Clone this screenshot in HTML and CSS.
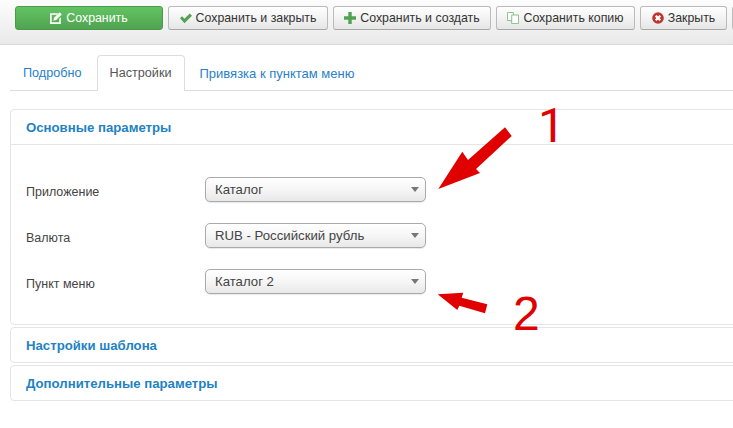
FILE: index.html
```html
<!DOCTYPE html>
<html lang="ru">
<head>
<meta charset="utf-8">
<title>Настройки</title>
<link rel="stylesheet" href="styles.css">
</head>
<body>
<div class="toolbar">
  <button class="btn btn-save"><svg class="ic" viewBox="0 0 14 14"><path fill="#fff" d="M0 1.500h9.500L8 3.200H2v8.800h8.800V8L12.600 6.200V14H0z"/><path fill="#fff" d="M11.200.3l2.500 2.500-6.500 6.500-3.300.8.800-3.300z"/></svg>Сохранить</button>
  <button class="btn btn-close-save"><svg class="ic" viewBox="0 0 14 14"><path fill="#51a351" d="M0 7.400l2.400-2.400 2.800 2.800L11.400 1.800 14 4.400 5.200 13z"/></svg>Сохранить и закрыть</button>
  <button class="btn btn-new"><svg class="ic" viewBox="0 0 14 14"><path fill="#51a351" d="M5 0h4v5h5v4H9v5H5V9H0V5h5z"/></svg>Сохранить и создать</button>
  <button class="btn btn-copy"><svg class="ic" viewBox="0 0 14 14"><path fill="#fff" stroke="#78b878" d="M.5.500h7v9.500h-7z"/><path fill="#fff" stroke="#78b878" d="M5.500 3.500h8v10h-8z"/></svg>Сохранить копию</button>
  <button class="btn btn-exit"><svg class="ic" viewBox="0 0 14 14"><circle cx="7" cy="7" r="6.800" fill="#bd362f"/><path stroke="#fff" stroke-width="2.600" d="M4.300 4.300l5.400 5.400M9.700 4.300l-5.400 5.400"/></svg>Закрыть</button>
  <button class="btn btn-stub"></button>
</div>

<div class="tabs">
  <a class="tab">Подробно</a>
  <a class="tab tab-active">Настройки</a>
  <a class="tab tab-wide">Привязка к пунктам меню</a>
</div>

<div class="accordion">
  <section class="panel">
    <h3 class="panel-head panel-head-open">Основные параметры</h3>
    <div class="panel-body">
      <div class="row"><label class="row-label">Приложение</label><div class="select"><span>Каталог</span><i class="caret"></i></div></div>
      <div class="row"><label class="row-label">Валюта</label><div class="select"><span>RUB - Российский рубль</span><i class="caret"></i></div></div>
      <div class="row"><label class="row-label">Пункт меню</label><div class="select"><span>Каталог 2</span><i class="caret"></i></div></div>
    </div>
  </section>
  <section class="panel panel-second"><h3 class="panel-head">Настройки шаблона</h3></section>
  <section class="panel panel-third"><h3 class="panel-head">Дополнительные параметры</h3></section>
</div>

<svg class="arrow arrow-one" viewBox="438 126 76 66"><path fill="#e00000" d="M438.300 189 L462.300 151.700 L468 160 L505 127.300 L511.700 136 L476 169 L480 173 Z"/></svg>
<span class="mark mark-one">1</span>
<svg class="arrow arrow-two" viewBox="437 292 52 24"><path fill="#e00000" d="M437.700 294.300 L463.300 292.700 L461.700 297.700 L487.300 304.300 L485 313.300 L459.300 305.700 L457.300 310 Z"/></svg>
<span class="mark mark-two">2</span>
</body>
</html>
```

FILE: styles.css
```css
* { box-sizing: border-box; }
html, body { margin: 0; padding: 0; }
body {
  width: 733px;
  height: 428px;
  overflow: hidden;
  position: relative;
  background: #fff;
  font-family: "Liberation Sans", Arial, sans-serif;
  font-size: 12.500px;
  color: #333;
}
.toolbar {
  height: 45px;
  display: flex;
  gap: 5px;
  padding: 6px 0 0 15px;
  background: linear-gradient(#fdfdfd, #e9e9e9);
  border-bottom: 1px solid #d9d9d9;
  overflow: hidden;
}
.btn {
  flex: none;
  height: 24px;
  display: flex;
  align-items: center;
  justify-content: center;
  gap: 4px;
  padding: 0;
  font: 12.350px "Liberation Sans", Arial, sans-serif;
  color: #333;
  background: linear-gradient(#fff, #e6e6e6);
  border: 1px solid #bbb;
  border-bottom-color: #a8a8a8;
  border-radius: 3px;
}
.ic { width: 12px; height: 12px; flex: none; }
.btn-save {
  width: 148px;
  color: #fff;
  background: linear-gradient(#62c462, #51a351);
  border-color: #4b9a4b;
}
.btn-close-save { width: 160px; }
.btn-new { width: 158px; }
.btn-copy { width: 139px; }
.btn-exit { width: 87px; }
.btn-stub { width: 20px; }
.tabs {
  display: flex;
  gap: 2px;
  height: 46px;
  margin: 0 0 0 10px;
  padding-top: 10px;
  border-bottom: 1px solid #ddd;
  font-size: 12.650px;
}
.tab {
  height: 35px;
  padding: 0 12px;
  line-height: 35px;
  color: #2a7fc9;
  border: 1px solid transparent;
  border-bottom: 0;
}
.tab-wide { font-size: 13px; }
.tab-active {
  height: 36px;
  margin-bottom: -1px;
  color: #555;
  background: #fff;
  border-color: #ddd;
  border-radius: 4px 4px 0 0;
}
.accordion {
  width: 760px;
  margin: 18px 0 0 10px;
}
.panel {
  border: 1px solid #e5e5e5;
  border-radius: 4px;
}
.panel-second { margin-top: 2px; height: 36px; }
.panel-third { margin-top: 2px; height: 36px; }
.panel-head {
  margin: 0;
  padding: 0 15px;
  height: 35px;
  line-height: 35px;
  font-size: 13.200px;
  font-weight: bold;
  color: #1f82c4;
}
.panel-head-open { border-bottom: 1px solid #e5e5e5; }
.panel-body { height: 179px; padding: 32px 0 0 15px; }
.row {
  display: flex;
  align-items: center;
  height: 25px;
  margin-bottom: 21px;
}
.row-label { width: 179px; color: #444; position: relative; top: 2px; }
.select {
  width: 221px;
  height: 25px;
  padding: 0 9px;
  display: flex;
  align-items: center;
  justify-content: space-between;
  font-size: 13.200px;
  background: linear-gradient(#fff 0%, #f6f6f6 50%, #e8e8e8 100%);
  border: 1px solid #aaa;
  border-radius: 5px;
  box-shadow: 0 1px 1px #e8e8e8;
}
.select span { color: #444; }
.caret {
  width: 0;
  height: 0;
  margin-right: -3px;
  border-left: 4px solid transparent;
  border-right: 4px solid transparent;
  border-top: 5px solid #777;
}
.arrow { position: absolute; display: block; }
.arrow-one { left: 438px; top: 126px; width: 76px; height: 66px; }
.arrow-two { left: 437px; top: 292px; width: 52px; height: 24px; }
.mark {
  position: absolute;
  font-size: 48px;
  line-height: 48px;
  color: #e00000;
}
.mark-one { left: 538px; top: 102px; font-family: Roboto, sans-serif; }
.mark-two { left: 513px; top: 290px; font-family: "Liberation Sans", Arial, sans-serif; }
```
